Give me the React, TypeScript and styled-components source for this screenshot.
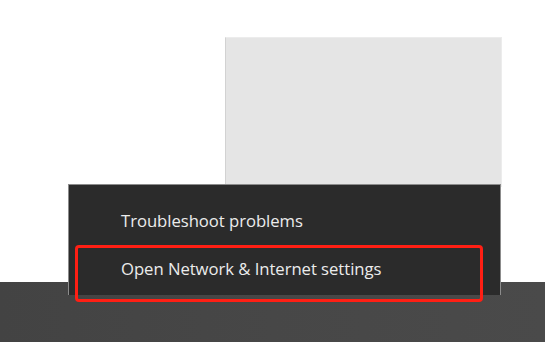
import React from "react";
import styled, { createGlobalStyle } from "styled-components";

const Global = createGlobalStyle`
  html, body { margin: 0; padding: 0; background: #ffffff; }
  body { font-family: "Open Sans", "Noto Sans", sans-serif; }
`;

const Screen = styled.div`
  position: relative;
  width: 545px;
  height: 342px;
  overflow: hidden;
  display: flex;
  flex-direction: column;
  background: #ffffff;
`;

const Desktop = styled.div`
  position: relative;
  flex: 1;
`;

const Window = styled.div`
  position: absolute;
  left: 225px;
  top: 37px;
  width: 277px;
  height: 150px;
  background: #e5e5e5;
  border-left: 1px solid #d2d2d2;
  border-top: 1px solid #ececec;
  border-right: 1px solid #ececec;
  box-sizing: border-box;
`;

const Taskbar = styled.div`
  height: 60px;
  background: linear-gradient(90deg, #434343 0%, #474747 50%, #4a4a4a 100%);
`;

const Menu = styled.div`
  position: absolute;
  left: 68px;
  top: 184px;
  width: 433px;
  height: 111px;
  box-sizing: border-box;
  background: #2b2b2b;
  border: 1px solid #8c8c8c;
  border-bottom: none;
  padding-top: 12px;
  z-index: 2;
  display: flex;
  flex-direction: column;
`;

const Item = styled.div`
  position: relative;
  height: 48px;
  line-height: 48px;
  padding-left: 52px;
  color: #ececec;
  font-size: 16.7px;
  letter-spacing: -0.05px;
  white-space: nowrap;
`;

const Highlight = styled.div`
  position: absolute;
  left: 6px;
  top: 0px;
  width: 408px;
  height: 57px;
  box-sizing: border-box;
  border: 3.5px solid #ff1f14;
  border-radius: 4px;
  pointer-events: none;
`;

export default function App() {
  return (
    <>
      <Global />
      <Screen>
        <Desktop>
          <Window />
          <Menu>
            <Item>Troubleshoot problems</Item>
            <Item>
              Open Network &amp; Internet settings
              <Highlight />
            </Item>
          </Menu>
        </Desktop>
        <Taskbar />
      </Screen>
    </>
  );
}
